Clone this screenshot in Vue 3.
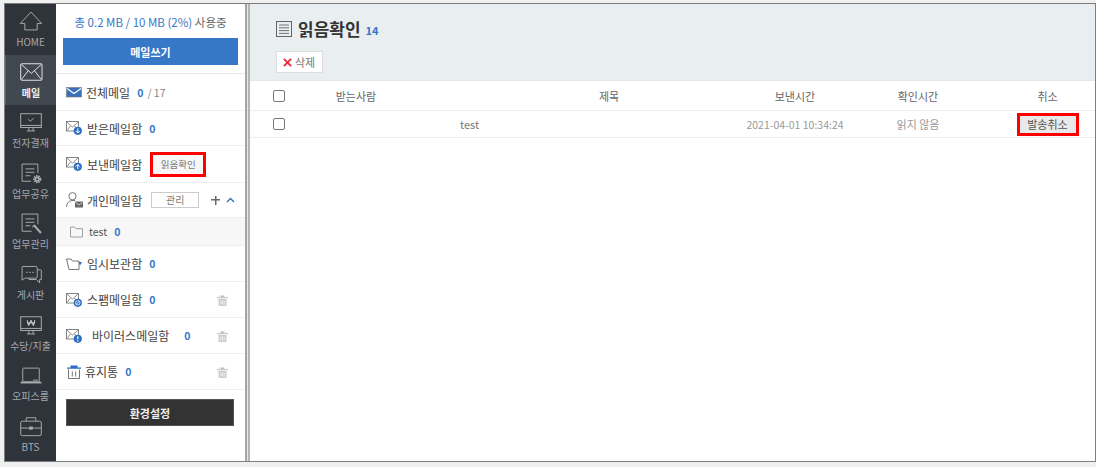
<script setup>
const nav = [
  { key: 'home', label: 'HOME' },
  { key: 'mail', label: '메일', active: true },
  { key: 'approval', label: '전자결재' },
  { key: 'share', label: '업무공유' },
  { key: 'manage', label: '업무관리' },
  { key: 'board', label: '게시판' },
  { key: 'pay', label: '수당/지출' },
  { key: 'office', label: '오피스룸' },
  { key: 'bts', label: 'BTS' },
]
</script>

<template>
  <div class="frame">
    <nav class="rail">
      <div v-for="n in nav" :key="n.key" class="rail-item" :class="[n.key, { active: n.active }]">
        <svg class="rail-icon" viewBox="0 0 34 32" fill="none" stroke="#a9acb0" stroke-width="1.4">
          <template v-if="n.key === 'home'">
            <path d="M17 3 L1.5 19.5 H8 V29 H26 V19.5 H32.5 Z" />
          </template>
          <template v-else-if="n.key === 'mail'">
            <rect x="2" y="4" width="31" height="24" rx="1.5" stroke="#e4e6e8" />
            <path d="M3 5 L17.5 18 L32 5 M3 27 L13 14 M32 27 L22 14" stroke="#e4e6e8" />
          </template>
          <template v-else-if="n.key === 'approval'">
            <rect x="2" y="4" width="30" height="20" />
            <path d="M11 29 H23 M14 24 V29 M20 24 V29 M2 21 H32 M13 12 L16 15 L21 10" />
          </template>
          <template v-else-if="n.key === 'share'">
            <path d="M17 28 H4 V3 H27 V16" />
            <path d="M9 10 H22 M9 15 H22 M9 20 H16" />
            <circle cx="26" cy="25" r="4.5" stroke-width="3" stroke-dasharray="2 1.2" />
            <circle cx="26" cy="25" r="3.8" fill="#a9acb0" stroke="none" />
            <circle cx="26" cy="25" r="1.5" fill="#2f343b" stroke="none" />
          </template>
          <template v-else-if="n.key === 'manage'">
            <path d="M18 28 H4 V3 H27 V18" />
            <path d="M9 10 H22 M9 15 H22 M9 20 H16" />
            <path d="M21 20 L31 31 M19 22 L22 19 L32 30" stroke-width="1.5" />
          </template>
          <template v-else-if="n.key === 'board'">
            <path d="M5 5 H24 Q26 5 26 7 V20 Q26 22 24 22 H8 L4 25 V6 Q4 5 5 5 Z" />
            <path d="M26 10 H31 Q32 10 32 11 V24 H29.5 V29 L25 24 H14 V22" />
            <path d="M10 13.5 H12 M14.5 13.5 H16.5 M19 13.5 H21" stroke-width="1.8" />
          </template>
          <template v-else-if="n.key === 'pay'">
            <rect x="2" y="4" width="30" height="20" />
            <path d="M11 29 H23 M14 24 V29 M20 24 V29 M2 21 H32" />
            <path d="M11.5 9 L13.5 17 L17 9 L20.5 17 L22.5 9 M11 13 H23" stroke="#d5d7d9" />
          </template>
          <template v-else-if="n.key === 'office'">
            <rect x="5" y="6" width="24" height="20" rx="1" />
            <path d="M2 27 H32" stroke-width="2.6" /><path d="M20 23.5 H27" />
          </template>
          <template v-else>
            <rect x="2" y="9" width="30" height="21" rx="2.5" />
            <path d="M10 9 V4 H24 V9 M2 19 H14 M20 19 H32" />
            <rect x="15" y="17.5" width="4" height="3" fill="#a9acb0" />
          </template>
        </svg>
        <span class="rail-label">{{ n.label }}</span>
      </div>
    </nav>

    <aside class="panel">
      <p class="quota"><b>총 0.2 MB / 10 MB (2%)</b> 사용중</p>
      <div class="compose-wrap"><button class="compose">메일쓰기</button></div>

      <div class="box r37">
        <svg class="mi" viewBox="0 0 16 14"><rect x="0.5" y="2.5" width="15" height="9.5" fill="#3b6fb8" stroke="#777" stroke-width=".6" /><path d="M1 3.5 L8 8.5 L15 3.5" fill="none" stroke="#fff" stroke-width="1.2" /></svg>
        <span class="name tight">전체메일</span><span class="cnt">0</span><span class="tot">/ 17</span>
      </div>
      <div class="box r35">
        <svg class="mi" viewBox="0 0 16 14"><rect x=".5" y=".5" width="12" height="9.5" fill="none" stroke="#777" stroke-width=".9" /><path d="M1 1.2 L6.5 6 L12 1.2 M1 9.5 L4.5 5 M12 9.5 L8.5 5" fill="none" stroke="#777" stroke-width=".8" /><circle cx="11.8" cy="9.8" r="4.1" fill="#2f6fc0" /><path d="M11.8 7.4 V12 M9.8 10 L11.8 12 L13.8 10" fill="none" stroke="#fff" stroke-width="1" /></svg>
        <span class="name">받은메일함</span><span class="cnt">0</span>
      </div>
      <div class="box r37">
        <svg class="mi" viewBox="0 0 16 14"><rect x=".5" y=".5" width="12" height="9.5" fill="none" stroke="#777" stroke-width=".9" /><path d="M1 1.2 L6.5 6 L12 1.2 M1 9.5 L4.5 5 M12 9.5 L8.5 5" fill="none" stroke="#777" stroke-width=".8" /><circle cx="11.8" cy="9.8" r="4.1" fill="#2f6fc0" /><path d="M11.8 12.2 V7.6 M9.8 9.6 L11.8 7.6 L13.8 9.6" fill="none" stroke="#fff" stroke-width="1" /></svg>
        <span class="name">보낸메일함</span>
        <span class="read-tag">읽음확인</span>
      </div>
      <div class="box r35 personal">
        <svg class="mi big" viewBox="0 0 17 16"><circle cx="6.5" cy="4.2" r="3.6" fill="none" stroke="#666" stroke-width=".9" /><path d="M.5 15 Q1 9 6 8.5 H9" fill="none" stroke="#666" stroke-width=".9" /><rect x="9" y="9.5" width="8" height="6" fill="#666" /><path d="M9.5 10.5 L13 13 L16.5 10.5" fill="none" stroke="#fff" stroke-width=".7" /></svg>
        <span class="name">개인메일함</span>
        <span class="manage-btn">관리</span>
        <span class="plus"></span>
        <svg class="chev" viewBox="0 0 9 6"><path d="M1 5 L4.5 1.5 L8 5" fill="none" stroke="#2f6fc0" stroke-width="1.3" /></svg>
      </div>
      <div class="sub">
        <svg class="folder" viewBox="0 0 13 12"><path d="M.5 11 V1 H4.5 L6 2.7 H12.5 V11 Z" fill="none" stroke="#8a8a8a" stroke-width=".8" /></svg>
        <span class="sub-name">test</span><span class="cnt">0</span>
      </div>
      <div class="box r36">
        <svg class="mi" viewBox="0 0 16 14"><path d="M.5 2 H5 L6.5 4 H13 V12.5 H3 Z" fill="none" stroke="#666" stroke-width=".9" /><path d="M12.5 5 H16 L14 8.5 Z" fill="#2f6fc0" /></svg>
        <span class="name">임시보관함</span><span class="cnt">0</span>
      </div>
      <div class="box r36">
        <svg class="mi" viewBox="0 0 16 14"><rect x=".5" y=".5" width="12" height="9.5" fill="none" stroke="#777" stroke-width=".9" /><path d="M1 1.2 L6.5 6 L12 1.2 M1 9.5 L4.5 5 M12 9.5 L8.5 5" fill="none" stroke="#777" stroke-width=".8" /><circle cx="11.8" cy="9.8" r="4.1" fill="#2f6fc0" /><circle cx="11.8" cy="9.8" r="2.2" fill="none" stroke="#fff" stroke-width=".8" /><path d="M10.2 11.4 L13.4 8.2" stroke="#fff" stroke-width=".8" /></svg>
        <span class="name">스팸메일함</span><span class="cnt">0</span>
        <svg class="trash" viewBox="0 0 11 11"><path d="M0 2.2 H11 V3.2 H0 Z M3.5 2 V.5 H7.5 V2" fill="#bbb" /><path d="M1.5 4 H9.5 V11 H1.5 Z" fill="#ccc" /><path d="M3.8 5.5 V9.5 M5.5 5.5 V9.5 M7.2 5.5 V9.5" stroke="#fff" stroke-width=".7" /></svg>
      </div>
      <div class="box r36">
        <svg class="mi" viewBox="0 0 16 14"><rect x=".5" y=".5" width="12" height="9.5" fill="none" stroke="#777" stroke-width=".9" /><path d="M1 1.2 L6.5 6 L12 1.2 M1 9.5 L4.5 5 M12 9.5 L8.5 5" fill="none" stroke="#777" stroke-width=".8" /><circle cx="11.8" cy="9.8" r="4.1" fill="#2f6fc0" /><path d="M11.8 7.2 V10.2 M11.8 11.2 V12.4" stroke="#fff" stroke-width="1.2" /></svg>
        <span class="name virus">바이러스메일함</span><span class="cnt wide">0</span>
        <svg class="trash" viewBox="0 0 11 11"><path d="M0 2.2 H11 V3.2 H0 Z M3.5 2 V.5 H7.5 V2" fill="#bbb" /><path d="M1.5 4 H9.5 V11 H1.5 Z" fill="#ccc" /><path d="M3.8 5.5 V9.5 M5.5 5.5 V9.5 M7.2 5.5 V9.5" stroke="#fff" stroke-width=".7" /></svg>
      </div>
      <div class="box r36">
        <svg class="mi bin" viewBox="0 0 14 14"><path d="M0 2.4 H14 V3.8 H0 Z M3.5 2.4 V.5 H10.5 V2.4" fill="#2f6fc0" /><path d="M1.5 4.5 V13.5 H12.5 V4.5" fill="none" stroke="#666" stroke-width=".9" /><path d="M5.3 6.5 V11.5 M8.7 6.5 V11.5" stroke="#666" stroke-width=".9" /></svg>
        <span class="name tight2">휴지통</span><span class="cnt">0</span>
        <svg class="trash" viewBox="0 0 11 11"><path d="M0 2.2 H11 V3.2 H0 Z M3.5 2 V.5 H7.5 V2" fill="#bbb" /><path d="M1.5 4 H9.5 V11 H1.5 Z" fill="#ccc" /><path d="M3.8 5.5 V9.5 M5.5 5.5 V9.5 M7.2 5.5 V9.5" stroke="#fff" stroke-width=".7" /></svg>
      </div>
      <div class="settings-wrap"><button class="settings">환경설정</button></div>
    </aside>

    <div class="split"></div>

    <main class="main">
      <header class="head">
        <div class="title-row">
          <svg class="doc" viewBox="0 0 16 16"><rect x=".5" y=".5" width="15" height="15" fill="none" stroke="#666" /><path d="M3 4 H13 M3 6.8 H13 M3 9.6 H13 M3 12.4 H13" stroke="#666" stroke-width=".9" /></svg>
          <h1>읽음확인</h1><span class="count">14</span>
        </div>
        <button class="del">
          <svg viewBox="0 0 10 10"><path d="M1 1 L9 9 M9 1 L1 9" stroke="#ee2b3f" stroke-width="2.2" /></svg>삭제
        </button>
      </header>
      <div class="row th">
        <span class="chk"></span><span>받는사람</span><span class="subj">제목</span><span>보낸시간</span><span>확인시간</span><span class="last">취소</span>
      </div>
      <div class="row td">
        <span class="chk"></span><span></span><span class="test">test</span><span class="soft date">2021-04-01 10:34:24</span><span class="soft">읽지 않음</span>
        <span class="last"><button class="cancel">발송취소</button></span>
      </div>
    </main>
  </div>
</template>

<style>
html, body { margin: 0; background: #f0f0f0; }
</style>

<style scoped>
* { box-sizing: border-box; }
.frame {
  width: 1092px; height: 459px; margin: 3px 0 0 4px;
  display: flex; border: 1px solid #7d7d7d; background: #fff; overflow: hidden;
  font-family: "Noto Sans CJK KR", "Noto Sans", sans-serif; color: #444;
}
.rail { width: 51px; flex: none; background: #2f343b; display: flex; flex-direction: column; }
.rail-item { height: 50.6px; flex: none; display: flex; flex-direction: column; align-items: center; padding-top: 6px; }
.rail-item.active { background: #42484f; border-left: 1px solid #2f6fa8; }
.rail-icon { width: 24px; height: 22px; flex: none; display: block; margin-bottom: 3px; }
.rail-label { font-size: 10px; line-height: 13px; color: #a4a7ab; white-space: nowrap; }
.active .rail-label { color: #f0f0f0; font-weight: 700; }
.panel { width: 189px; flex: none; display: flex; flex-direction: column; font-size: 12px; background: #fff; }
.quota { margin: 0; height: 34px; padding-top: 3px; line-height: 30px; text-align: center; font-size: 11.5px; color: #666; white-space: nowrap; }
.quota b { font-weight: 400; color: #3777c8; }
.compose-wrap { padding: 0 7px; height: 36px; border-bottom: 1px solid #eaeaea; }
.compose { width: 175px; height: 27px; display: block; border: 0; background: #3777c8; color: #fff; font: 700 11px "Noto Sans CJK KR", sans-serif; }
.box { display: flex; align-items: center; padding-left: 10px; border-bottom: 1px solid #eee; position: relative; }
.r37 { height: 37px; } .r35 { height: 35px; } .r36 { height: 36px; }
.mi { width: 16px; height: 14px; flex: none; margin-right: 5px; }
.mi.big { width: 17px; height: 16px; margin-right: 4px; }
.name { font-size: 12px; color: #444; white-space: nowrap; }
.tight { margin-left: -1px; }
.tight2 { margin-left: -2px; }
.virus { margin-left: 5px; }
.cnt { font-size: 10.5px; font-weight: 700; color: #3777c8; margin-left: 7px; }
.cnt.wide { margin-left: 15px; }
.tot { font-size: 10.5px; color: #888; margin-left: 4px; }
.read-tag {
  width: 56px; height: 25px; margin-left: 8px; border: 3px solid #f00; background: #f7f7f7;
  font-size: 9.5px; line-height: 19px; text-align: center; color: #777;
}
.manage-btn { width: 48px; height: 16px; margin-left: 9px; border: 1px solid #ccc; font-size: 10px; line-height: 14px; text-align: center; color: #777; }
.plus { width: 9px; height: 9px; margin-left: 12px; background: linear-gradient(#666,#666) center/9px 1.5px no-repeat, linear-gradient(#666,#666) center/1.5px 9px no-repeat; }
.chev { width: 9px; height: 6px; margin-left: 6px; }
.sub { height: 28px; background: #f7f7f7; display: flex; align-items: center; padding-left: 14px; border-bottom: 1px solid #eee; }
.folder { width: 13px; height: 12px; margin-right: 6px; }
.sub-name { font-size: 10.5px; color: #555; }
.trash { position: absolute; left: 161px; top: 13px; width: 11px; height: 11px; }
.settings-wrap { padding: 9px 10px; }
.settings { width: 168px; height: 27px; display: block; border: 1px solid #555; background: #333; color: #eee; font: 700 11px "Noto Sans CJK KR", sans-serif; }
.split { width: 5px; flex: none; background: linear-gradient(90deg, #a5a5a5 0 2px, #e6e6e6 2px 3px, #b5b5b5 3px 5px); }
.main { flex: 1; min-width: 0; }
.head { height: 77px; background: #e9eef1; padding: 12px 0 0 26px; border-bottom: 1px solid #e4e7e9; }
.title-row { display: flex; align-items: center; height: 26px; }
.doc { width: 16px; height: 16px; margin-right: 6px; }
h1 { margin: 0; font-size: 17px; font-weight: 700; color: #333; line-height: 26px; }
.count { font-size: 11px; font-weight: 700; color: #3777c8; margin-left: 5px; padding-top: 2px; }
.del { margin-top: 9px; width: 47px; height: 22px; display: flex; align-items: center; gap: 3px; padding: 0 0 0 6px; border: 1px solid #ddd; background: #fff; color: #777; font: 11px "Noto Sans CJK KR", sans-serif; }
.del svg { width: 9px; height: 9px; }
.row { display: grid; grid-template-columns: 42px 112px 306px 154px 92px 1fr; align-items: center; padding-left: 8px; text-align: center; font-size: 11px; color: #666; border-bottom: 1px solid #eee; }
.th { height: 30px; }
.td { height: 27px; }
.chk { width: 12px; height: 12px; border: 1px solid #777; border-radius: 2px; justify-self: center; }
.subj { padding-left: 88px; }
.test { text-align: left; padding-left: 48px; color: #777; }
.soft { color: #999; }
.date { font-size: 10.5px; }
.last { padding-left: 36px; }
.cancel { width: 62px; height: 23px; padding: 0; border: 3px solid #f00; background: #e9e9e9; color: #555; font: 11px "Noto Sans CJK KR", sans-serif; display: inline-block; vertical-align: middle; }
</style>
